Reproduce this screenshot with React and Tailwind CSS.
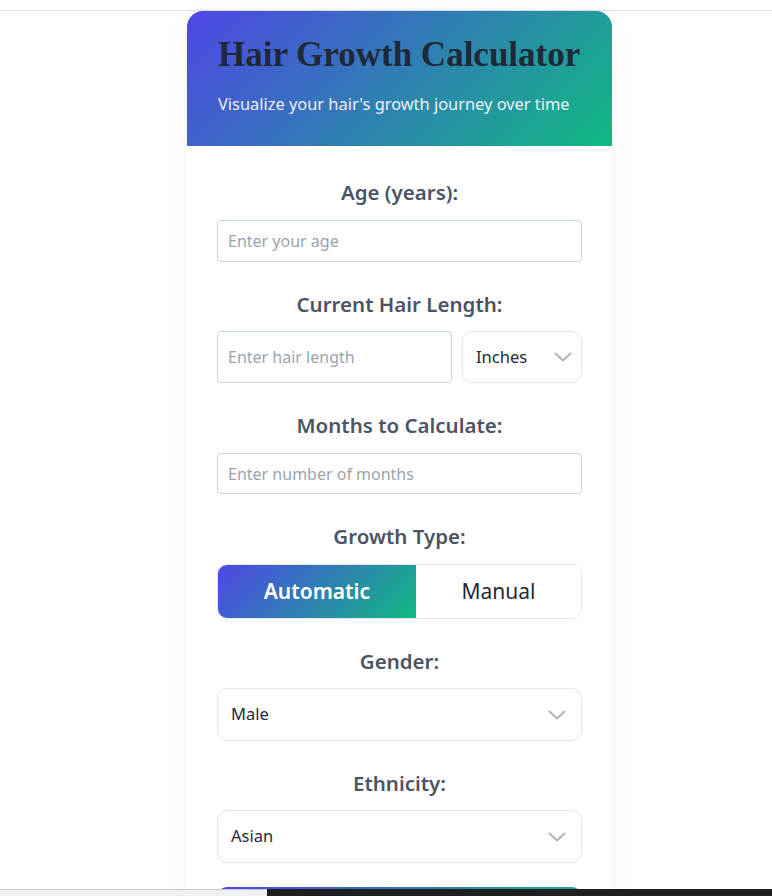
import { useState } from "react";

const font = { fontFamily: '"Noto Sans", "Open Sans", sans-serif' };

function Chevron() {
    return (
        <svg width="18" height="10" viewBox="0 0 18 10" fill="none" className="shrink-0">
            <path d="M1.5 1.5 L9 8.5 L16.5 1.5" stroke="#b3b3b3" strokeWidth="2" strokeLinecap="round" strokeLinejoin="round" />
        </svg>
    );
}

function Label({ children, className = "mb-[15px]" }) {
    return <div className={"text-center text-[20.5px] leading-[26px] font-semibold text-[#4b5563] " + className}>{children}</div>;
}

function TextInput({ placeholder, className = "" }) {
    return (
        <input
            placeholder={placeholder}
            className={"block w-full rounded-[4px] border border-[#cbd5e1] bg-white px-[10px] text-[16px] text-[#1f2937] placeholder:text-[#9ca3af] outline-none " + className}
        />
    );
}

function SelectBox({ value, className = "" }) {
    return (
        <div className={"flex items-center justify-between rounded-[10px] border border-[#e5e7eb] bg-white " + className}>
            <span className="text-[16.5px] text-[#1f2937]">{value}</span>
            <Chevron />
        </div>
    );
}

export default function App() {
    const [mode, setMode] = useState("auto");

    return (
        <div className="min-h-screen bg-white" style={font}>
            <div className="h-[11px] border-b border-[#e2e2e2]"></div>
            <div className="ml-[187px] w-[425px] rounded-t-[16px] bg-white shadow-[0_0_20px_rgba(0,0,0,0.06)]">
                <div className="h-[135px] rounded-t-[16px] bg-[linear-gradient(135deg,#4f46e5,#10b981)] px-[31px] pt-[24px]">
                    <h1 className="whitespace-nowrap text-[35px] leading-[40px] font-bold text-[#1f2937]" style={{ fontFamily: '"Liberation Serif", "Times New Roman", serif' }}>
                        Hair Growth Calculator
                    </h1>
                    <p className="mt-[17px] whitespace-nowrap text-[16.4px] leading-[24px] text-[#eef0f6]">Visualize your hair's growth journey over time</p>
                </div>

                <div className="px-[30px] pt-[33px] pb-[40px] flex flex-col gap-[29px]">
                    <div>
                        <Label>Age (years):</Label>
                        <TextInput placeholder="Enter your age" className="h-[42px]" />
                    </div>

                    <div>
                        <Label className="mb-[14px]">Current Hair Length:</Label>
                        <div className="flex gap-[10px]">
                            <TextInput placeholder="Enter hair length" className="h-[52px] !w-[235px] shrink-0" />
                            <SelectBox value="Inches" className="h-[52px] flex-1 pl-[13px] pr-[9px]" />
                        </div>
                    </div>

                    <div>
                        <Label>Months to Calculate:</Label>
                        <TextInput placeholder="Enter number of months" className="h-[41px]" />
                    </div>

                    <div>
                        <Label>Growth Type:</Label>
                        <div className="flex h-[55px] overflow-hidden rounded-[10px] border border-[#e5e7eb]">
                            <button
                                onClick={() => setMode("auto")}
                                className={"grow text-[21px] " + (mode === "auto" ? "bg-[linear-gradient(135deg,#4f46e5,#10b981)] text-white font-semibold" : "bg-white text-[#1f2937]")}
                            >
                                Automatic
                            </button>
                            <button
                                onClick={() => setMode("manual")}
                                className={"grow text-[21px] " + (mode === "manual" ? "bg-[linear-gradient(135deg,#4f46e5,#10b981)] text-white font-semibold" : "bg-white text-[#1f2937]")}
                            >
                                Manual
                            </button>
                        </div>
                    </div>

                    <div>
                        <Label className="mb-[14px]">Gender:</Label>
                        <SelectBox value="Male" className="h-[53px] pl-[13px] pr-[15px]" />
                    </div>

                    <div>
                        <Label className="mb-[14px]">Ethnicity:</Label>
                        <SelectBox value="Asian" className="h-[53px] pl-[13px] pr-[15px]" />
                    </div>

                    <button className="-mt-[5px] h-[56px] w-full rounded-[10px] bg-[linear-gradient(135deg,#4f46e5,#10b981)] text-[18px] font-semibold text-white">
                        Calculate Growth
                    </button>
                </div>
            </div>

            <div className="fixed bottom-0 left-0 right-0 flex h-[7px]">
                <div className="w-[267px] border-t border-[#c6c6c6] bg-[#f0f0f0]"></div>
                <div className="flex-1 bg-[#1f1f1f]"></div>
            </div>
        </div>
    );
}
